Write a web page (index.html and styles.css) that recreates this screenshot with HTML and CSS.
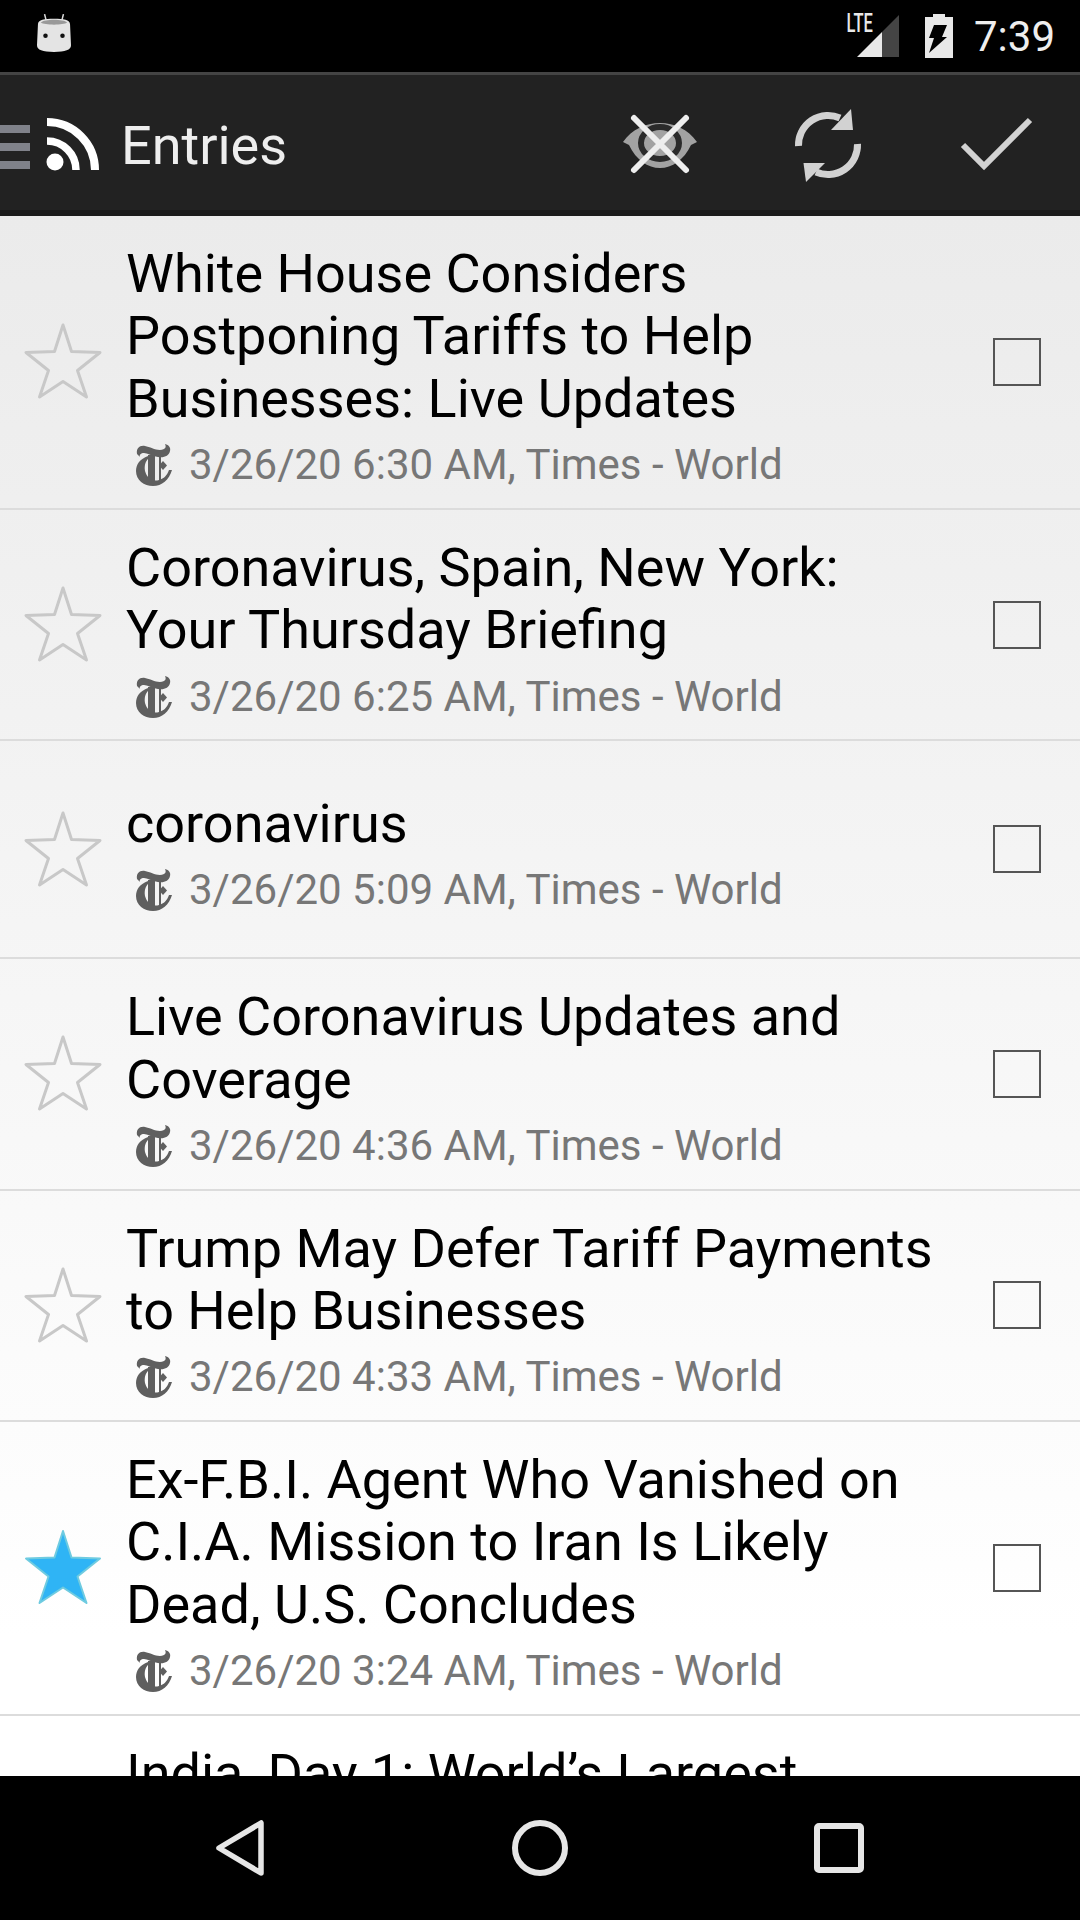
FILE: index.html
```html
<!DOCTYPE html>
<html lang="en">
<head>
    <meta charset="utf-8" />
    <title>Entries</title>
    <meta name="viewport" content="width=device-width, initial-scale=1" />
    <link rel="stylesheet" href="styles.css">
</head>
<body>
<svg class="defs" width="0" height="0">
    <symbol id="star" viewBox="-3 -3 82 79">
        <path d="M38 0 L46.5 26.5 L75 27.5 L52.5 45.5 L61.5 72 L38 56.5 L14.5 72 L23.5 45.5 L1 27.5 L29.5 26.5 Z" />
    </symbol>
    <symbol id="nyt" viewBox="0 0 36 42">
        <g fill="#5f5f5f">
            <path d="M1 10 C0 4 4 1 9 2 C15 3 22 8 28 5 C30 4 30 2 29 0 C33 1 35 4 34 7 C33 12 28 14 22 13 C16 12 11 9 8 9 C5 9 3 11 4 13 Z" />
            <path d="M12 12 C4 15 0 20 0 27 C0 36 8 42 17 42 C26 42 33 36 36 26 L33 26 C31 32 27 35 23 36 C16 38 11 34 9 27 C8 21 10 17 12 15 Z" />
            <rect x="12" y="11" width="7" height="26" />
            <rect x="23" y="12" width="2" height="24" />
            <path d="M27 17 L31 21.5 L27 26 L23 21.5 Z" />
        </g>
    </symbol>
</svg>

<div class="status-bar">
    <svg class="cat-icon" viewBox="0 0 36 42">
        <path d="M8 1 L10 9 M28 1 L26 9" stroke="#ddd" stroke-width="1.6" fill="none" />
        <path fill="#e4e4e4" d="M1 12 C1 7 8 6 18 6 C28 6 35 7 35 12 L36 34 C36 39 30 41 18 41 C6 41 0 39 0 34 Z" />
        <path fill="#999" d="M4 10 C8 6 28 6 32 10 C28 13 8 13 4 10 Z" />
        <circle cx="9" cy="24" r="2.4" fill="#111" />
        <circle cx="27" cy="24" r="2.4" fill="#111" />
    </svg>
    <div class="status-right">
        <span class="lte">LTE</span>
        <svg class="signal" viewBox="0 0 43 43">
            <path fill="#444" d="M42 0 V42 H25 V17 Z" />
            <path fill="#e8e8e8" d="M25 17 V42 H0 Z" />
        </svg>
        <svg class="battery" viewBox="0 0 30 44">
            <path fill="#e8e8e8" d="M9 0 H21 V3 H29 V44 H1 V3 H9 Z" />
            <path fill="#000" d="M10 11 H23 L18 23 H23 L5 39 L10 24 H5 Z" />
        </svg>
        <span class="clock">7:39</span>
    </div>
</div>

<div class="toolbar">
    <div class="home">
        <div class="drawer"><i></i><i></i><i></i></div>
        <svg class="rss" viewBox="0 0 54 54">
            <circle cx="9" cy="45" r="8.5" fill="#fff" />
            <path fill="none" stroke="#fff" stroke-width="7.5" d="M1 24 A29 29 0 0 1 30 53" />
            <path fill="none" stroke="#fff" stroke-width="8" d="M1 5 A48 48 0 0 1 49 53" />
        </svg>
        <span class="screen-title">Entries</span>
    </div>
    <div class="actions">
        <svg class="action" viewBox="0 0 80 80">
            <path fill="#a2a2a2" d="M3 38 C12 25 26 19 40 19 C54 19 68 25 77 38 L71 41 C64 56 52 64 40 64 C28 64 16 56 9 41 Z" />
            <ellipse cx="40" cy="39" rx="19" ry="16" fill="none" stroke="#2a2a2a" stroke-width="6" />
            <path stroke="#eee" stroke-width="6" stroke-linecap="round" fill="none" d="M14 14 L66 66 M66 14 L14 66" />
        </svg>
        <svg class="action" viewBox="0 0 80 80">
            <path fill="none" stroke="#d2d2d2" stroke-width="7" d="M10.5 42 A29.5 29.5 0 0 1 52 14" />
            <path fill="#d2d2d2" d="M63 5 L65 26 L43 26 Z" />
            <path fill="none" stroke="#d2d2d2" stroke-width="7" d="M69.5 40 A29.5 29.5 0 0 1 28 68" />
            <path fill="#d2d2d2" d="M18 78 L15.5 59 L37 59 Z" />
        </svg>
        <svg class="action" viewBox="0 0 80 80">
            <path fill="none" stroke="#d2d2d2" stroke-width="6" d="M7 41 L28 62 L74 16" />
        </svg>
    </div>
</div>
<div class="toolbar-shadow"></div>

<div class="entries">
    <div class="entry">
        <svg class="star"><use href="#star" /></svg>
        <div class="entry-text">
            <div class="entry-title">White House Considers Postponing Tariffs to Help Businesses: Live Updates</div>
            <div class="entry-meta"><svg class="feed-icon"><use href="#nyt" /></svg>3/26/20 6:30 AM, Times - World</div>
        </div>
        <div class="check"></div>
    </div>
    <div class="entry">
        <svg class="star"><use href="#star" /></svg>
        <div class="entry-text">
            <div class="entry-title">Coronavirus, Spain, New York: Your Thursday Briefing</div>
            <div class="entry-meta"><svg class="feed-icon"><use href="#nyt" /></svg>3/26/20 6:25 AM, Times - World</div>
        </div>
        <div class="check"></div>
    </div>
    <div class="entry">
        <svg class="star"><use href="#star" /></svg>
        <div class="entry-text">
            <div class="entry-title">coronavirus</div>
            <div class="entry-meta"><svg class="feed-icon"><use href="#nyt" /></svg>3/26/20 5:09 AM, Times - World</div>
        </div>
        <div class="check"></div>
    </div>
    <div class="entry">
        <svg class="star"><use href="#star" /></svg>
        <div class="entry-text">
            <div class="entry-title">Live Coronavirus Updates and Coverage</div>
            <div class="entry-meta"><svg class="feed-icon"><use href="#nyt" /></svg>3/26/20 4:36 AM, Times - World</div>
        </div>
        <div class="check"></div>
    </div>
    <div class="entry">
        <svg class="star"><use href="#star" /></svg>
        <div class="entry-text">
            <div class="entry-title">Trump May Defer Tariff Payments to Help Businesses</div>
            <div class="entry-meta"><svg class="feed-icon"><use href="#nyt" /></svg>3/26/20 4:33 AM, Times - World</div>
        </div>
        <div class="check"></div>
    </div>
    <div class="entry">
        <svg class="star starred"><use href="#star" /></svg>
        <div class="entry-text">
            <div class="entry-title">Ex-F.B.I. Agent Who Vanished on C.I.A. Mission to Iran Is Likely Dead, U.S. Concludes</div>
            <div class="entry-meta"><svg class="feed-icon"><use href="#nyt" /></svg>3/26/20 3:24 AM, Times - World</div>
        </div>
        <div class="check"></div>
    </div>
    <div class="entry entry-cut">
        <svg class="star"><use href="#star" /></svg>
        <div class="entry-text">
            <div class="entry-title">India, Day 1: World’s Largest</div>
        </div>
        <div class="check"></div>
    </div>
</div>

<div class="nav-bar">
    <svg class="nav-icon" viewBox="0 0 60 60">
        <path fill="none" stroke="#e6e6e6" stroke-width="5.5" stroke-linejoin="round" d="M50 5 V55 L8 30 Z" />
    </svg>
    <svg class="nav-icon" viewBox="0 0 60 60">
        <circle cx="30" cy="30" r="25" fill="none" stroke="#e6e6e6" stroke-width="6" />
    </svg>
    <svg class="nav-icon" viewBox="0 0 60 60">
        <rect x="8" y="8" width="44" height="44" rx="2" fill="none" stroke="#e6e6e6" stroke-width="6" />
    </svg>
</div>
</body>
</html>
```

FILE: styles.css
```css
html, body { margin: 0; padding: 0; }
body {
    width: 1080px; height: 1920px; overflow: hidden;
    display: flex; flex-direction: column;
    background-color: #fff;
    font-family: Roboto, "Liberation Sans", sans-serif;
}
.defs { position: absolute; }

.status-bar {
    height: 72px; flex: none; background-color: #000;
    display: flex; align-items: center; justify-content: space-between;
    padding: 0 25px 0 37px; box-sizing: border-box;
}
.cat-icon { width: 34px; height: 42px; margin-bottom: 6px; }
.status-right { display: flex; align-items: center; }
.lte {
    color: #e8e8e8; font-size: 25px; font-weight: 500; line-height: 20px;
    transform: scaleX(0.66); transform-origin: right;
    margin-right: -16px; margin-bottom: 24px;
}
.signal { width: 43px; height: 43px; }
.battery { width: 30px; height: 44px; margin-left: 24px; }
.clock { color: #eee; font-size: 42px; margin-left: 20px; }

.toolbar {
    height: 138px; flex: none; box-sizing: border-box; background-color: #222;
    border-top: 3px solid #444; padding-top: 3px;
    display: flex; align-items: center; justify-content: space-between;
}
.toolbar-shadow { height: 6px; flex: none; background-color: #1b1b1b; }
.home { display: flex; align-items: center; }
.drawer { width: 30px; display: flex; flex-direction: column; gap: 10px; margin-top: 5px; }
.drawer i { display: block; height: 8px; background-color: #80828a; }
.rss { width: 54px; height: 54px; margin-left: 16px; }
.screen-title { color: #eee; font-size: 54px; margin: 2px 0 0 21px; }
.actions { display: flex; align-items: center; padding-right: 44px; }
.action { width: 80px; height: 80px; margin-left: 88px; }

.entries {
    flex: 1; min-height: 0; overflow: hidden;
    background: linear-gradient(#ebebeb, #fff 1420px);
}
.entry {
    display: flex; align-items: center;
    min-height: 218px; box-sizing: border-box;
    border-bottom: 2px solid #dcdcdc;
}
.star {
    width: 82px; height: 79px; flex: none; margin-left: 22px;
    fill: none; stroke: #c8c8c8; stroke-width: 3; stroke-linejoin: round;
}
.star.starred { fill: #2fb4f5; stroke: #6fcbe0; stroke-width: 2; }
.entry-text { flex: 1; min-width: 0; margin-left: 22px; padding: 27px 0 11.6px; }
.entry-title {
    width: 825px; color: #000; font-size: 54px; line-height: 62.4px;
}
.entry-meta {
    display: flex; align-items: center; margin-top: 4px;
    color: #777; font-size: 42px; line-height: 62px;
}
.feed-icon { width: 36px; height: 42px; margin: 0 17px 0 10px; flex: none; }
.check {
    width: 48px; height: 48px; flex: none; box-sizing: border-box;
    border: 2px solid #555; margin-right: 39px;
}
.entry-cut { min-height: 294px; }
.entry-cut .entry-text { align-self: flex-start; }

.nav-bar {
    height: 144px; flex: none; background-color: #000;
    display: flex; align-items: center; justify-content: space-between;
    padding: 0 211px;
}
.nav-icon { width: 60px; height: 60px; }
```
